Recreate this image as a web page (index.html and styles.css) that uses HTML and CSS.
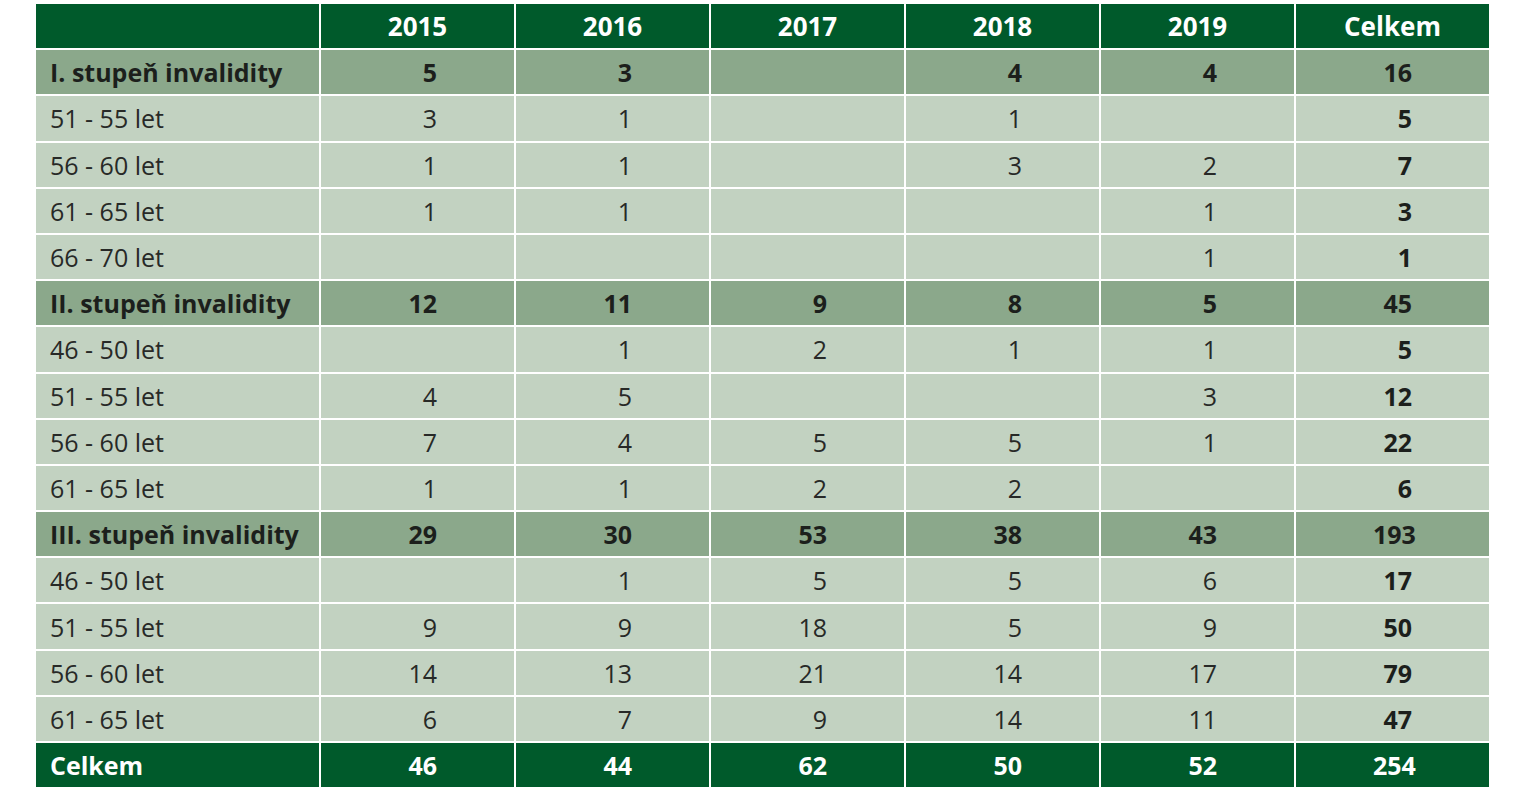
FILE: index.html
```html
<!DOCTYPE html>
<html lang="cs">
<head>
<meta charset="utf-8">
<title>Invalidita</title>
<link rel="stylesheet" href="styles.css">
</head>
<body>
<div class="table">
  <div class="row head">
    <div class="cell label"></div>
    <div class="cell">2015</div><div class="cell">2016</div><div class="cell">2017</div><div class="cell">2018</div><div class="cell">2019</div><div class="cell">Celkem</div>
  </div>

  <div class="row section">
    <div class="cell label">I. stupeň invalidity</div>
    <div class="cell"><span class="n">5</span></div><div class="cell"><span class="n">3</span></div><div class="cell"><span class="n"></span></div><div class="cell"><span class="n">4</span></div><div class="cell"><span class="n">4</span></div><div class="cell"><span class="n">16</span></div>
  </div>
  <div class="row body">
    <div class="cell label">51 - 55 let</div>
    <div class="cell"><span class="n">3</span></div><div class="cell"><span class="n">1</span></div><div class="cell"><span class="n"></span></div><div class="cell"><span class="n">1</span></div><div class="cell"><span class="n"></span></div><div class="cell total"><span class="n">5</span></div>
  </div>
  <div class="row body">
    <div class="cell label">56 - 60 let</div>
    <div class="cell"><span class="n">1</span></div><div class="cell"><span class="n">1</span></div><div class="cell"><span class="n"></span></div><div class="cell"><span class="n">3</span></div><div class="cell"><span class="n">2</span></div><div class="cell total"><span class="n">7</span></div>
  </div>
  <div class="row body">
    <div class="cell label">61 - 65 let</div>
    <div class="cell"><span class="n">1</span></div><div class="cell"><span class="n">1</span></div><div class="cell"><span class="n"></span></div><div class="cell"><span class="n"></span></div><div class="cell"><span class="n">1</span></div><div class="cell total"><span class="n">3</span></div>
  </div>
  <div class="row body">
    <div class="cell label">66 - 70 let</div>
    <div class="cell"><span class="n"></span></div><div class="cell"><span class="n"></span></div><div class="cell"><span class="n"></span></div><div class="cell"><span class="n"></span></div><div class="cell"><span class="n">1</span></div><div class="cell total"><span class="n">1</span></div>
  </div>

  <div class="row section">
    <div class="cell label">II. stupeň invalidity</div>
    <div class="cell"><span class="n">12</span></div><div class="cell"><span class="n">11</span></div><div class="cell"><span class="n">9</span></div><div class="cell"><span class="n">8</span></div><div class="cell"><span class="n">5</span></div><div class="cell"><span class="n">45</span></div>
  </div>
  <div class="row body">
    <div class="cell label">46 - 50 let</div>
    <div class="cell"><span class="n"></span></div><div class="cell"><span class="n">1</span></div><div class="cell"><span class="n">2</span></div><div class="cell"><span class="n">1</span></div><div class="cell"><span class="n">1</span></div><div class="cell total"><span class="n">5</span></div>
  </div>
  <div class="row body">
    <div class="cell label">51 - 55 let</div>
    <div class="cell"><span class="n">4</span></div><div class="cell"><span class="n">5</span></div><div class="cell"><span class="n"></span></div><div class="cell"><span class="n"></span></div><div class="cell"><span class="n">3</span></div><div class="cell total"><span class="n">12</span></div>
  </div>
  <div class="row body">
    <div class="cell label">56 - 60 let</div>
    <div class="cell"><span class="n">7</span></div><div class="cell"><span class="n">4</span></div><div class="cell"><span class="n">5</span></div><div class="cell"><span class="n">5</span></div><div class="cell"><span class="n">1</span></div><div class="cell total"><span class="n">22</span></div>
  </div>
  <div class="row body">
    <div class="cell label">61 - 65 let</div>
    <div class="cell"><span class="n">1</span></div><div class="cell"><span class="n">1</span></div><div class="cell"><span class="n">2</span></div><div class="cell"><span class="n">2</span></div><div class="cell"><span class="n"></span></div><div class="cell total"><span class="n">6</span></div>
  </div>

  <div class="row section">
    <div class="cell label">III. stupeň invalidity</div>
    <div class="cell"><span class="n">29</span></div><div class="cell"><span class="n">30</span></div><div class="cell"><span class="n">53</span></div><div class="cell"><span class="n">38</span></div><div class="cell"><span class="n">43</span></div><div class="cell"><span class="n">193</span></div>
  </div>
  <div class="row body">
    <div class="cell label">46 - 50 let</div>
    <div class="cell"><span class="n"></span></div><div class="cell"><span class="n">1</span></div><div class="cell"><span class="n">5</span></div><div class="cell"><span class="n">5</span></div><div class="cell"><span class="n">6</span></div><div class="cell total"><span class="n">17</span></div>
  </div>
  <div class="row body">
    <div class="cell label">51 - 55 let</div>
    <div class="cell"><span class="n">9</span></div><div class="cell"><span class="n">9</span></div><div class="cell"><span class="n">18</span></div><div class="cell"><span class="n">5</span></div><div class="cell"><span class="n">9</span></div><div class="cell total"><span class="n">50</span></div>
  </div>
  <div class="row body">
    <div class="cell label">56 - 60 let</div>
    <div class="cell"><span class="n">14</span></div><div class="cell"><span class="n">13</span></div><div class="cell"><span class="n">21</span></div><div class="cell"><span class="n">14</span></div><div class="cell"><span class="n">17</span></div><div class="cell total"><span class="n">79</span></div>
  </div>
  <div class="row body">
    <div class="cell label">61 - 65 let</div>
    <div class="cell"><span class="n">6</span></div><div class="cell"><span class="n">7</span></div><div class="cell"><span class="n">9</span></div><div class="cell"><span class="n">14</span></div><div class="cell"><span class="n">11</span></div><div class="cell total"><span class="n">47</span></div>
  </div>

  <div class="row foot">
    <div class="cell label">Celkem</div>
    <div class="cell"><span class="n">46</span></div><div class="cell"><span class="n">44</span></div><div class="cell"><span class="n">62</span></div><div class="cell"><span class="n">50</span></div><div class="cell"><span class="n">52</span></div><div class="cell"><span class="n">254</span></div>
  </div>
</div>
</body>
</html>
```

FILE: styles.css
```css
html, body {
  margin: 0;
  padding: 0;
  background: #ffffff;
}

body {
  padding: 4px 0 0 36px;
  font-family: "Open Sans", "Noto Sans", sans-serif;
  font-size: 25px;
  color: #272927;
}

.table {
  display: grid;
  grid-auto-rows: 44.2px;
  row-gap: 2px;
  width: 1453px;
}

.row {
  display: grid;
  grid-template-columns: 283px repeat(6, 193px);
  column-gap: 2px;
}

.cell {
  display: flex;
  align-items: center;
  justify-content: center;
  white-space: nowrap;
}

.cell.label {
  justify-content: flex-start;
  padding-left: 14px;
}

.n {
  display: inline-block;
  width: 39px;
  text-align: right;
}

.head .cell,
.foot .cell {
  background: #005a2b;
  color: #ffffff;
  font-weight: 700;
}

.head .cell {
  font-size: 26px;
}

.section .cell {
  background: #8ba88b;
  color: #1c1f1c;
  font-weight: 700;
}

.body .cell {
  background: #c2d2c1;
}

.body .cell.total {
  font-weight: 700;
  color: #1c1f1c;
}
```
